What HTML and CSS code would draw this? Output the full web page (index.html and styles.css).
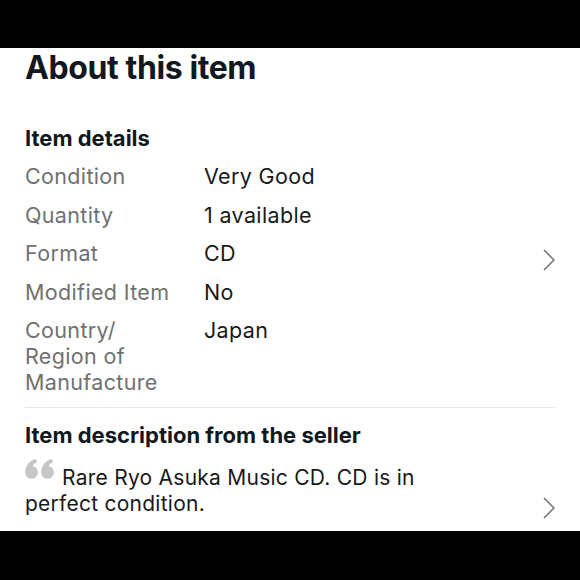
FILE: index.html
```html
<!DOCTYPE html>
<html>
<head>
<meta charset="utf-8">
<link rel="stylesheet" href="styles.css">
</head>
<body>
<div class="bar"></div>
<main class="page">
  <h1 class="title">About this item</h1>
  <section class="details">
    <div class="details-main">
      <h2 class="subtitle">Item details</h2>
      <dl class="specs">
        <dt>Condition</dt><dd>Very Good</dd>
        <dt>Quantity</dt><dd>1 available</dd>
        <dt>Format</dt><dd>CD</dd>
        <dt>Modified Item</dt><dd>No</dd>
        <dt>Country/<br>Region of<br>Manufacture</dt><dd>Japan</dd>
      </dl>
    </div>
    <svg class="chev" width="12" height="22" viewBox="0 0 12 22"><path d="M1 1 L11 11 L1 21" fill="none" stroke="#6f6f6f" stroke-width="1.5"/></svg>
  </section>
  <section class="desc">
    <div class="desc-main">
      <h2 class="subtitle desc-title">Item description from the seller</h2>
      <p class="quote"><svg class="qmark" width="31" height="20" viewBox="0 0 31 20"><g fill="#c6c6c6"><circle cx="6.6" cy="13.4" r="6.4"/><path d="M0.3 13.6 C0.2 6.5 4 1.8 10.6 0 L12.4 2.7 C8.6 4.6 6.8 7 6.9 9.2 Z"/><circle cx="22.6" cy="13.4" r="6.4"/><path d="M16.3 13.6 C16.2 6.5 20 1.8 26.6 0 L28.4 2.7 C24.6 4.6 22.8 7 22.9 9.2 Z"/></g></svg>Rare Ryo Asuka Music CD. CD is in perfect condition.</p>
    </div>
    <svg class="chev chev-low" width="12" height="22" viewBox="0 0 12 22"><path d="M1 1 L11 11 L1 21" fill="none" stroke="#6f6f6f" stroke-width="1.5"/></svg>
  </section>
</main>
<div class="bar"></div>
</body>
</html>
```

FILE: styles.css
```css
html, body {
  margin: 0;
  padding: 0;
  background: #000;
}
body {
  font-family: Inter, "Noto Sans", "Liberation Sans", sans-serif;
  width: 580px;
  height: 580px;
  overflow: hidden;
}
.bar {
  height: 48px;
  background: #000;
}
.page {
  background: #fff;
  height: 483px;
  overflow: hidden;
  padding: 2px 25px 0 25px;
  box-sizing: border-box;
  display: flex;
  flex-direction: column;
}
.title {
  margin: 0;
  font-size: 32px;
  line-height: 36px;
  font-weight: 700;
  color: #111820;
  letter-spacing: -0.4px;
}
.subtitle {
  margin: 0;
  font-size: 22px;
  line-height: 26px;
  font-weight: 700;
  color: #111820;
  letter-spacing: 0;
}
.details {
  display: flex;
  align-items: center;
  margin-top: 39px;
  padding-bottom: 12px;
  border-bottom: 1px solid #e8e8e8;
}
.details-main {
  flex: 1;
}
.specs {
  display: grid;
  grid-template-columns: 179px 1fr;
  row-gap: 12.5px;
  margin: 12px 0 0 0;
  font-size: 21.5px;
  line-height: 26px;
  letter-spacing: 0.35px;
}
.specs dt {
  color: #707070;
}
.specs dd {
  margin: 0;
  color: #191919;
}
.chev {
  flex: none;
  display: block;
}
.desc {
  display: flex;
  flex: 1;
}
.desc-main {
  flex: 1;
}
.desc-title {
  margin-top: 14px;
}
.quote {
  margin: 17px 0 0 0;
  font-size: 21px;
  line-height: 26px;
  letter-spacing: 0.25px;
  color: #191919;
  width: 410px;
}
.qmark {
  vertical-align: 6px;
  margin-top: -6px;
  margin-right: 6px;
}
.chev-low {
  align-self: flex-end;
  margin-bottom: 12px;
}
```
